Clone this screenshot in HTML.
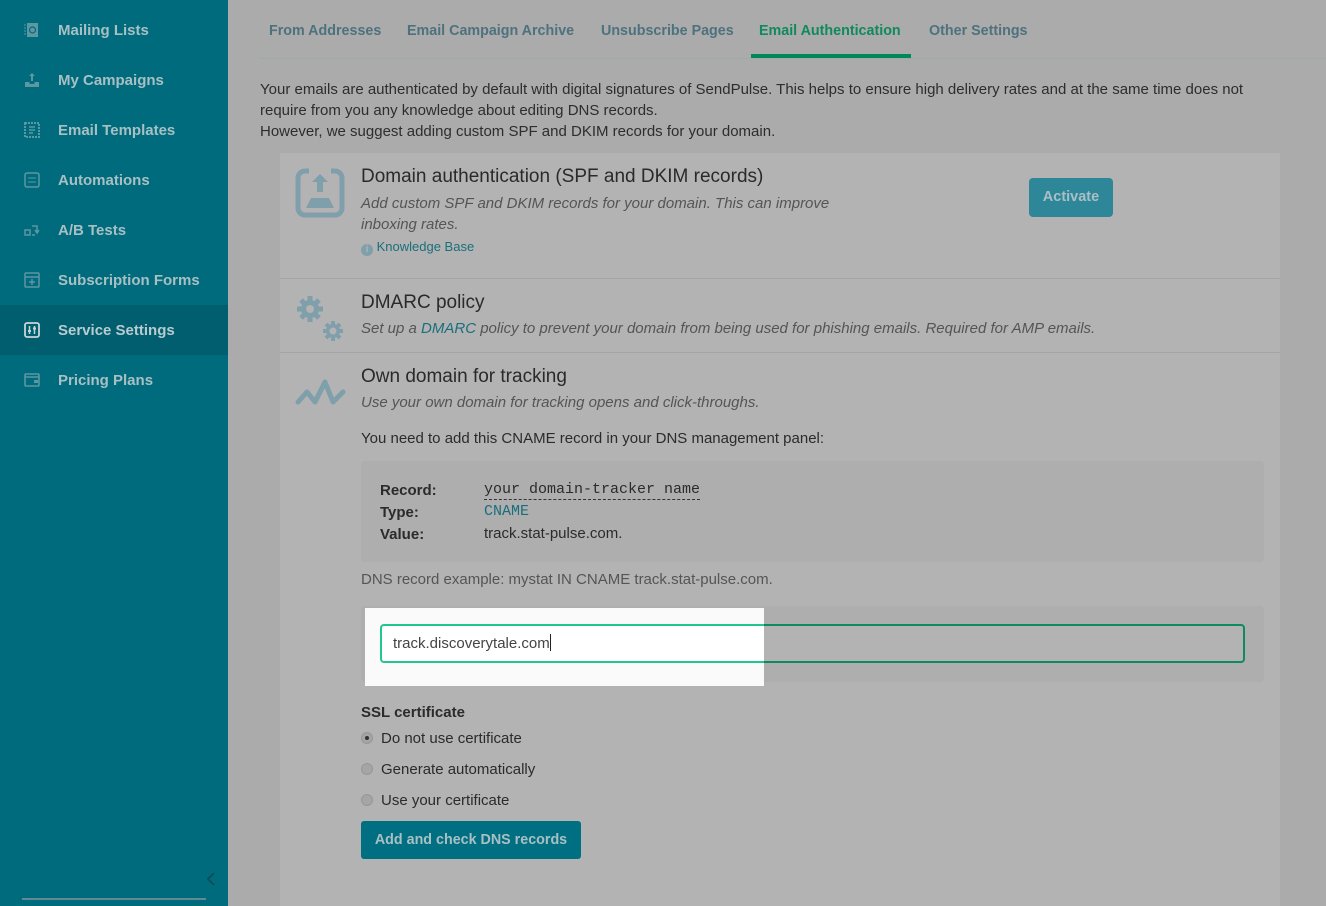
<!DOCTYPE html>
<html style="overflow:hidden;width:1326px;height:906px"><head><meta charset="utf-8"><style>
*{box-sizing:border-box;margin:0;padding:0}
body{width:1326px;height:906px;overflow:hidden;background:#ababab;font-family:"Liberation Sans",sans-serif;position:relative;color:#2b2b2b}
.sb{position:absolute;left:0;top:0;width:228px;height:906px;background:#006b7c}
.it{position:absolute;left:0;width:228px;height:50px;display:flex;align-items:center;color:#a8c0c4;font-weight:bold;font-size:15px}
.it span{position:absolute;left:58px;top:17px}
.it svg{position:absolute;left:24px}
.act{background:#005e6f}
.a{position:absolute;white-space:nowrap}
.tab{position:absolute;top:23px;font-size:14.3px;font-weight:bold;color:#4d727e}
.card{position:absolute;left:280px;top:153px;width:1000px;height:753px;background:#b3b3b3}
.hr{position:absolute;left:280px;width:1000px;height:1px;background:#a3a6a6}
.h{font-size:19px;color:#2a2a2a}
.sub{font-size:15px;font-style:italic;color:#555}
.rad{position:absolute;left:361px;width:12px;height:12px;border-radius:50%;background:#a5a5a5;border:1px solid #979797}
</style></head><body>
<div class="sb">
 <div class="it" style="top:5px"><svg width="16" height="16" viewBox="0 0 16 16"><rect x="3" y="1" width="11" height="14" fill="#5d97a1"/><circle cx="8.5" cy="8" r="3" fill="none" stroke="#006b7c" stroke-width="1.2"/><path d="M1 2v12" stroke="#5d97a1" stroke-dasharray="2 1"/></svg><span>Mailing Lists</span></div>
 <div class="it" style="top:55px"><svg width="16" height="16" viewBox="0 0 16 16"><path d="M8 1l-3 3h2v5h2V4h2z M1 10h4l1 2h4l1-2h4v5H1z" fill="#5d97a1"/></svg><span>My Campaigns</span></div>
 <div class="it" style="top:105px"><svg width="16" height="16" viewBox="0 0 16 16"><rect x="1" y="1" width="14" height="14" fill="none" stroke="#5d97a1" stroke-width="2" stroke-dasharray="2 1"/><path d="M5 5h6M5 8h6M5 11h4" stroke="#5d97a1" stroke-width="1.5"/></svg><span>Email Templates</span></div>
 <div class="it" style="top:155px"><svg width="16" height="16" viewBox="0 0 16 16"><rect x="1" y="1" width="14" height="14" rx="2" fill="none" stroke="#5d97a1" stroke-width="1.5"/><path d="M4 6h8M4 10h8" stroke="#5d97a1"/></svg><span>Automations</span></div>
 <div class="it" style="top:205px"><svg width="16" height="16" viewBox="0 0 16 16"><rect x="1" y="8" width="5" height="5" fill="none" stroke="#5d97a1" stroke-width="1.5"/><path d="M8 4h5v6M11 8l2 3 2-3M8 13h3" stroke="#5d97a1" stroke-width="1.5" fill="none"/></svg><span>A/B Tests</span></div>
 <div class="it" style="top:255px"><svg width="16" height="16" viewBox="0 0 16 16"><rect x="1" y="1" width="14" height="14" rx="1" fill="none" stroke="#5d97a1" stroke-width="1.5"/><path d="M1 5h14M8 7v6M5 10h6" stroke="#5d97a1" stroke-width="1.5"/></svg><span>Subscription Forms</span></div>
 <div class="it act" style="top:305px"><svg width="16" height="16" viewBox="0 0 16 16"><rect x="1" y="1" width="14" height="14" rx="2" fill="none" stroke="#c6d6d8" stroke-width="1.8"/><path d="M5.5 4v8M10.5 4v8" stroke="#c6d6d8" stroke-width="1.5"/><rect x="4" y="8" width="3" height="2" fill="#c6d6d8"/><rect x="9" y="5.5" width="3" height="2" fill="#c6d6d8"/></svg><span style="color:#b8cccf">Service Settings</span></div>
 <div class="it" style="top:355px"><svg width="16" height="16" viewBox="0 0 16 16"><rect x="1" y="2" width="14" height="12" rx="1" fill="none" stroke="#5d97a1" stroke-width="1.6"/><path d="M1 5h14" stroke="#5d97a1" stroke-width="1.5"/><rect x="10" y="8" width="4" height="3" fill="#5d97a1"/></svg><span>Pricing Plans</span></div>
 <svg class="a" style="left:206px;top:872px" width="10" height="14" viewBox="0 0 10 14"><path d="M8 1L2 7l6 6" stroke="#0d4d5a" stroke-width="1.8" fill="none"/></svg>
 <div class="a" style="left:22px;top:898px;width:184px;height:2px;background:#5f8a92"></div>
</div>
<div class="tab" style="left:269px">From Addresses</div>
<div class="tab" style="left:407px">Email Campaign Archive</div>
<div class="tab" style="left:601px">Unsubscribe Pages</div>
<div class="tab" style="left:759px;color:#0f8a5c">Email Authentication</div>
<div class="tab" style="left:929px">Other Settings</div>
<div class="a" style="left:260px;top:58px;width:1066px;height:1px;background:#9daaab"></div>
<div class="a" style="left:751px;top:54px;width:160px;height:4px;background:#00875a"></div>
<div class="a" style="left:260px;top:79px;font-size:15px;line-height:21px;color:#2d2d2d">Your emails are authenticated by default with digital signatures of SendPulse. This helps to ensure high delivery rates and at the same time does not<br>require from you any knowledge about editing DNS records.<br>However, we suggest adding custom SPF and DKIM records for your domain.</div>
<div class="card"></div>
<div class="hr" style="top:278px"></div>
<div class="hr" style="top:352px"></div>
<svg class="a" style="left:295px;top:168px" width="50" height="50" viewBox="0 0 50 50"><rect x="3" y="3" width="44" height="44" rx="7" fill="none" stroke="#7f9fab" stroke-width="5"/><rect x="14" y="0" width="22" height="8" fill="#b3b3b3"/><path d="M25 6l-8 8h5v10h6V14h5z" fill="#7f9fab"/><path d="M16 30h18l5 10H11z" fill="#7f9fab"/></svg>
<div class="a h" style="left:361px;top:166px">Domain authentication (SPF and DKIM records)</div>
<div class="a sub" style="left:361px;top:193px;line-height:21px">Add custom SPF and DKIM records for your domain. This can improve<br>inboxing rates.</div>
<div class="a" style="left:361px;top:239px;font-size:13px;color:#1a6f7d"><span style="display:inline-block;width:12px;height:12px;border-radius:50%;background:#7f9fab;color:#b3b3b3;font-size:10px;text-align:center;line-height:12px;font-weight:bold;vertical-align:-1px">i</span> Knowledge Base</div>
<div class="a" style="left:1029px;top:178px;width:84px;height:39px;border-radius:4px;background:#2e8799;color:#a8c0c4;font-weight:bold;font-size:14.5px;text-align:center;line-height:39px">Activate</div>
<svg class="a" style="left:295px;top:294px" width="50" height="50" viewBox="0 0 50 50"><g fill="#7f9fab"><circle cx="15" cy="15" r="9"/><g stroke="#7f9fab" stroke-width="5"><path d="M15 2v26M2 15h26M6 6l18 18M24 6L6 24"/></g><circle cx="38" cy="37" r="7"/><g stroke="#7f9fab" stroke-width="4"><path d="M38 27v20M28 37h20M31 30l14 14M45 30L31 44"/></g></g><circle cx="15" cy="15" r="4" fill="#b3b3b3"/><circle cx="38" cy="37" r="3.5" fill="#b3b3b3"/></svg>
<div class="a h" style="left:361px;top:292px">DMARC policy</div>
<div class="a sub" style="left:361px;top:320px">Set up a <span style="color:#1a6f7d">DMARC</span> policy to prevent your domain from being used for phishing emails. Required for AMP emails.</div>
<svg class="a" style="left:295px;top:378px" width="52" height="30" viewBox="0 0 52 30"><path d="M3 24l9-10 8 10 10-20 8 20 10-10" fill="none" stroke="#7f9fab" stroke-width="5" stroke-linejoin="round" stroke-linecap="round"/></svg>
<div class="a h" style="left:361px;top:366px">Own domain for tracking</div>
<div class="a sub" style="left:361px;top:394px">Use your own domain for tracking opens and click-throughs.</div>
<div class="a" style="left:361px;top:430px;font-size:15px">You need to add this CNAME record in your DNS management panel:</div>
<div class="a" style="left:361px;top:461px;width:903px;height:101px;border-radius:4px;background:#aeaeae"></div>
<div class="a" style="left:380px;top:480px;font-size:15px;font-weight:bold;line-height:22px">Record:<br>Type:<br>Value:</div>
<div class="a" style="left:484px;top:481px;font-family:'Liberation Mono',monospace;font-size:15px;border-bottom:1px dashed #333;line-height:18px">your domain-tracker name</div>
<div class="a" style="left:484px;top:503px;font-family:'Liberation Mono',monospace;font-size:15px;color:#1a6f7d">CNAME</div>
<div class="a" style="left:484px;top:525px;font-size:15px">track.stat-pulse.com.</div>
<div class="a" style="left:361px;top:571px;font-size:15px;color:#555">DNS record example: mystat IN CNAME track.stat-pulse.com.</div>
<div class="a" style="left:361px;top:606px;width:903px;height:76px;border-radius:4px;background:#aeaeae"></div>
<div class="a" style="left:380px;top:624px;width:865px;height:39px;border-radius:4px;border:2px solid #0e8a5f;background:#b3b3b3"></div>
<div class="a" style="left:365px;top:608px;width:399px;height:78px;background:#fafafa;overflow:hidden">
 <div class="a" style="left:15px;top:16px;width:865px;height:39px;border-radius:4px;border:2px solid #22c68f;background:#fff;font-size:15px;color:#444;padding-left:11px;line-height:35px">track.discoverytale.com<span style="display:inline-block;width:1px;height:17px;background:#222;vertical-align:-3px"></span></div>
</div>
<div class="a" style="left:361px;top:704px;font-size:15px;font-weight:bold">SSL certificate</div>
<div class="rad" style="top:732px"><div style="width:4px;height:4px;border-radius:50%;background:#333;margin:3px"></div></div>
<div class="rad" style="top:763px"></div>
<div class="rad" style="top:794px"></div>
<div class="a" style="left:381px;top:730px;font-size:15px">Do not use certificate</div>
<div class="a" style="left:381px;top:761px;font-size:15px">Generate automatically</div>
<div class="a" style="left:381px;top:792px;font-size:15px">Use your certificate</div>
<div class="a" style="left:361px;top:821px;width:220px;height:38px;border-radius:3px;background:#006f82;color:#a8c0c4;font-weight:bold;font-size:14.3px;text-align:center;line-height:38px">Add and check DNS records</div>
</body></html>
